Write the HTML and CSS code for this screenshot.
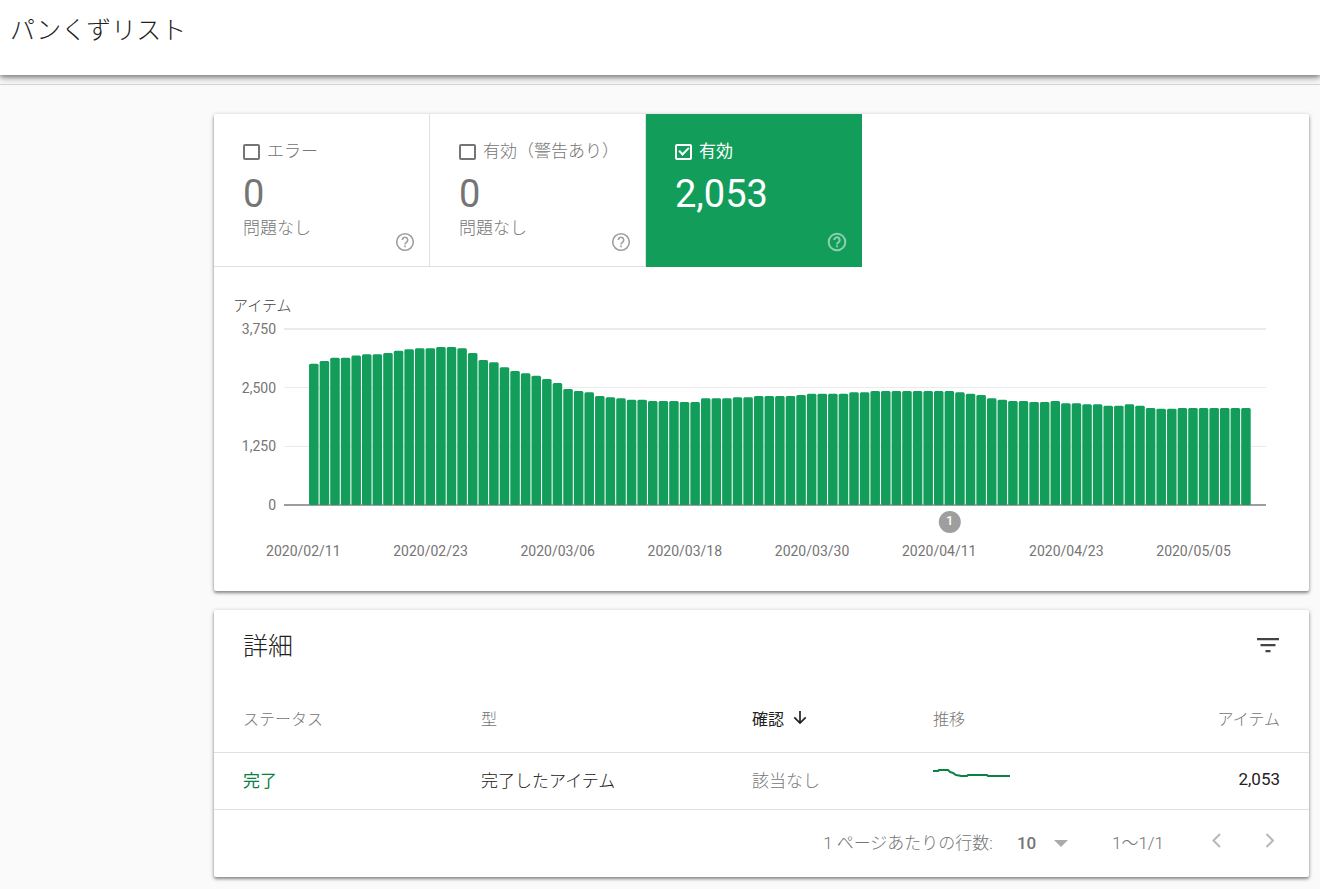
FILE: index.html
```html
<!DOCTYPE html>
<html lang="ja">
<head>
<meta charset="utf-8">
<title>パンくずリスト</title>
<link rel="stylesheet" href="styles.css">
</head>
<body>
<header class="topbar"><h1 class="topbar-title">パンくずリスト</h1></header>
<div class="subbar"></div>
<main class="content">
  <section class="card">
    <div class="tiles">
      <div class="tile">
        <label class="tile-label"><input class="check" type="checkbox">エラー</label>
        <div class="tile-count">0</div>
        <div class="tile-note">問題なし</div>
        <button class="help" type="button" aria-label="ヘルプ"><svg viewBox="0 0 20 20" width="20" height="20"><circle cx="10" cy="10" r="8.3"/><path d="M7.3 8a2.7 2.7 0 1 1 4.500 2c-1 .9-1.800 1.200-1.800 2.400"/><path d="M10 13.600v1.600"/></svg></button>
      </div>
      <div class="tile">
        <label class="tile-label"><input class="check" type="checkbox">有効（警告あり）</label>
        <div class="tile-count">0</div>
        <div class="tile-note">問題なし</div>
        <button class="help" type="button" aria-label="ヘルプ"><svg viewBox="0 0 20 20" width="20" height="20"><circle cx="10" cy="10" r="8.3"/><path d="M7.3 8a2.7 2.7 0 1 1 4.500 2c-1 .9-1.800 1.200-1.800 2.400"/><path d="M10 13.600v1.600"/></svg></button>
      </div>
      <div class="tile tile-active">
        <label class="tile-label"><input class="check" type="checkbox" checked>有効</label>
        <div class="tile-count">2,053</div>
        <button class="help" type="button" aria-label="ヘルプ"><svg viewBox="0 0 20 20" width="20" height="20"><circle cx="10" cy="10" r="8.3"/><path d="M7.3 8a2.7 2.7 0 1 1 4.500 2c-1 .9-1.800 1.200-1.800 2.400"/><path d="M10 13.600v1.600"/></svg></button>
      </div>
    </div>
    <div class="chart">
      <div class="chart-title">アイテム</div>
      <div class="chart-body">
        <div class="y-axis"><span>3,750</span><span>2,500</span><span>1,250</span><span>0</span></div>
        <svg class="plot" width="100%" height="242">
          <rect class="grid" x="0" y="8" width="100%" height="2"/>
          <rect class="grid" x="0" y="67" width="100%" height="1"/>
          <rect class="grid" x="0" y="126" width="100%" height="1"/>
          <rect class="base" x="0" y="184" width="100%" height="2"/>
          <g id="bars" class="bars"></g>
          <circle class="marker" cx="67.8%" cy="202" r="11"/>
          <text class="marker-text" x="67.8%" y="205">1</text>
          <g class="dates">
            <text x="1.97%" y="236">2020/02/11</text>
            <text x="14.92%" y="236">2020/02/23</text>
            <text x="27.87%" y="236">2020/03/06</text>
            <text x="40.82%" y="236">2020/03/18</text>
            <text x="53.77%" y="236">2020/03/30</text>
            <text x="66.72%" y="236">2020/04/11</text>
            <text x="79.67%" y="236">2020/04/23</text>
            <text x="92.62%" y="236">2020/05/05</text>
          </g>
        </svg>
      </div>
    </div>
  </section>

  <section class="card">
    <div class="details-head">
      <h2 class="details-title">詳細</h2>
      <button class="icon-btn" type="button" aria-label="フィルタ"><svg viewBox="0 0 24 24" width="24" height="24"><path fill="#444" d="M1 3h22v2.300H1zM4.500 9h15v2.200h-15zM9.500 15h5v2.300h-5z"/></svg></button>
    </div>
    <table class="details">
      <colgroup><col class="c-status"><col class="c-type"><col class="c-check"><col class="c-trend"><col></colgroup>
      <thead>
        <tr><th>ステータス</th><th>型</th><th class="sorted"><span class="sort">確認<svg viewBox="0 0 14 16" width="14" height="16"><path fill="none" stroke="#212121" stroke-width="1.700" d="M7 1v12M1.300 7.300 7 13l5.700-5.700"/></svg></span></th><th>推移</th><th class="num">アイテム</th></tr>
      </thead>
      <tbody>
        <tr><td class="done">完了</td><td>完了したアイテム</td><td class="muted">該当なし</td>
        <td><svg class="spark" viewBox="0 0 78 24" width="78" height="24"><path fill="none" stroke="#0b8043" stroke-width="2" d="M0 4h5l1-1h9l2 2 3 1 3 2 3 .5 2 .5h6l1-1h19l1 1h22"/></svg></td><td class="num">2,053</td></tr>
      </tbody>
    </table>
    <div class="pager">
      <label for="rows" class="pager-label">1 ページあたりの行数:</label>
      <span class="select-wrap"><select id="rows" class="rows"><option>10</option></select><svg viewBox="0 0 14 11" width="14" height="11"><path fill="#aaa" d="M0 4h14l-7 7z"/></svg></span>
      <span class="range">1～1/1</span>
      <button class="icon-btn" type="button" aria-label="前のページ"><svg viewBox="0 0 24 24" width="24" height="24"><path fill="none" stroke="#b8b8b8" stroke-width="2" d="M15 4 8.500 10.500 15 17"/></svg></button>
      <button class="icon-btn next" type="button" aria-label="次のページ"><svg viewBox="0 0 24 24" width="24" height="24"><path fill="none" stroke="#b8b8b8" stroke-width="2" d="M8.500 4 15 10.500 8.500 17"/></svg></button>
    </div>
  </section>
</main>
<script src="chart.js"></script>
</body>
</html>
```

FILE: styles.css
```css
*, ::before, ::after { box-sizing: border-box; }
body {
  margin: 0;
  background: #fafafa;
  color: #212121;
  font-family: Roboto, "Noto Sans CJK JP", sans-serif;
  font-size: 17px;
  font-weight: 300;
}
button { border: 0; padding: 0; background: none; cursor: pointer; }
svg { display: block; }

.topbar {
  position: relative;
  height: 75px;
  padding: 12px 10px;
  background: #fff;
  box-shadow: 0 2px 4px rgba(0, 0, 0, .3), 0 3px 8px rgba(0, 0, 0, .3);
}
.topbar-title { margin: 0; font-size: 25px; line-height: 38px; font-weight: 300; }
.subbar { height: 10px; border-bottom: 1px solid #d8d8d8; }

.content {
  display: flex;
  flex-direction: column;
  gap: 19px;
  padding: 29px 11px 11px 214px;
}
.card {
  background: #fff;
  border-radius: 2px;
  box-shadow: 0 2px 3px rgba(0, 0, 0, .35), 0 1px 5px rgba(0, 0, 0, .22);
}

.tiles { display: flex; }
.tile {
  position: relative;
  width: 216px;
  height: 153px;
  padding: 24px 0 0 29px;
  border-right: 1px solid #e0e0e0;
  border-bottom: 1px solid #e0e0e0;
  color: #757575;
}
.tile-active { background: #129e5a; border-color: #129e5a; color: #fff; }
.tile-label { display: flex; align-items: center; gap: 7px; line-height: 26px; white-space: nowrap; }
.tile-active .tile-label { font-weight: 400; }
.check {
  appearance: none;
  position: relative;
  width: 17px;
  height: 16px;
  margin: 2px 0 0;
  border: 2px solid currentColor;
  border-radius: 2px;
  color: inherit;
}
.check:checked::after {
  content: "";
  position: absolute;
  left: 2px;
  top: 1px;
  width: 10px;
  height: 6px;
  border: solid currentColor;
  border-width: 0 0 2px 2px;
  transform: rotate(-45deg);
}
.tile-count { font-size: 38px; line-height: 44px; font-weight: 400; margin-top: 8px; }
.tile-note { line-height: 24px; }
.help { position: absolute; right: 14px; bottom: 14px; }
.help svg { fill: none; stroke: #9e9e9e; stroke-width: 1.6; }
.tile-active .help svg { stroke: #8fceae; stroke-width: 2; }

.chart { padding: 29px 43px 29px 19px; }
.chart-title { font-size: 15px; line-height: 20px; color: #424242; }
.chart-body { display: flex; gap: 8px; margin-top: 4px; font-size: 14px; font-weight: 400; }
.y-axis {
  display: flex;
  flex-direction: column;
  justify-content: space-between;
  width: 43px;
  height: 194px;
  text-align: right;
  line-height: 18px;
  color: #757575;
}
.plot { flex: 1; min-width: 0; overflow: visible; }
.grid { fill: #ebebeb; }
.base { fill: #9e9e9e; }
.bars { fill: #129e5a; }
.marker { fill: #9e9e9e; }
.marker-text { fill: #fff; font-size: 13px; font-weight: 500; text-anchor: middle; }
.dates { fill: #757575; text-anchor: middle; }

.details-head { display: flex; justify-content: space-between; align-items: center; height: 74px; padding: 0 29px; }
.details-title { margin: 0; font-size: 25px; line-height: 36px; font-weight: 300; }
.icon-btn { width: 24px; height: 24px; }
.details { width: 100%; border-collapse: separate; border-spacing: 0; table-layout: fixed; }
.c-status { width: 267px; }
.c-type { width: 271px; }
.c-check { width: 181px; }
.c-trend { width: 181px; }
.details th { height: 69px; padding: 0; font-size: 16px; font-weight: 300; text-align: left; color: #757575; border-bottom: 1px solid #e0e0e0; }
.details td { height: 57px; padding: 0 0 4px; border-bottom: 1px solid #e0e0e0; }
.details th:first-child, .details td:first-child { padding-left: 29px; }
.details .num { text-align: right; padding-right: 29px; }
.details td.num { font-weight: 400; }
.details .sorted { color: #212121; font-weight: 400; }
.sort { display: flex; align-items: center; gap: 9px; }
.done { color: #0b8043; font-weight: 400; }
.muted { color: #757575; }
.spark { overflow: visible; }

.pager { display: flex; justify-content: flex-end; align-items: center; height: 67px; padding: 0 27px 4px 0; color: #757575; }
.pager-label { margin-right: 24px; }
.select-wrap { display: flex; align-items: center; gap: 17px; margin-right: 44px; }
.rows { appearance: none; border: 0; padding: 2px 0 0; background: none; color: inherit; font: 500 17px Roboto, sans-serif; }
.range { margin-right: 41px; }
.next { margin-left: 29px; }
```

FILE: chart.js
```js
// Daily item counts, 2020/02/11 to 2020/05/09
const counts = [
  3010, 3067, 3138, 3138, 3188, 3210, 3210, 3238, 3287, 3316, 3338, 3338,
  3365, 3365, 3338, 3238, 3088, 3040, 2933, 2854, 2805, 2754, 2684, 2599,
  2471, 2428, 2400, 2322, 2294, 2273, 2243, 2243, 2215, 2215, 2215, 2194,
  2194, 2273, 2273, 2273, 2294, 2294, 2322, 2322, 2322, 2322, 2343, 2371,
  2371, 2371, 2371, 2400, 2400, 2428, 2428, 2428, 2428, 2428, 2428, 2428,
  2428, 2400, 2371, 2343, 2273, 2243, 2215, 2215, 2194, 2194, 2215, 2166,
  2166, 2145, 2145, 2115, 2115, 2145, 2115, 2066, 2053, 2053, 2066, 2066,
  2066, 2066, 2066, 2066, 2066
];
const MAX = 3750;
const BASE = 185;
const HEIGHT = 176;
const START = 2.55;
const STEP = (98.55 - START) / counts.length;
const bars = document.getElementById("bars");
counts.forEach((count, i) => {
  const h = count / MAX * HEIGHT;
  const bar = document.createElementNS("http://www.w3.org/2000/svg", "rect");
  bar.setAttribute("x", START + i * STEP + "%");
  bar.setAttribute("y", BASE - h);
  bar.setAttribute("width", STEP * 0.9 + "%");
  bar.setAttribute("height", h);
  bar.setAttribute("rx", 1.5);
  bars.appendChild(bar);
});
```
